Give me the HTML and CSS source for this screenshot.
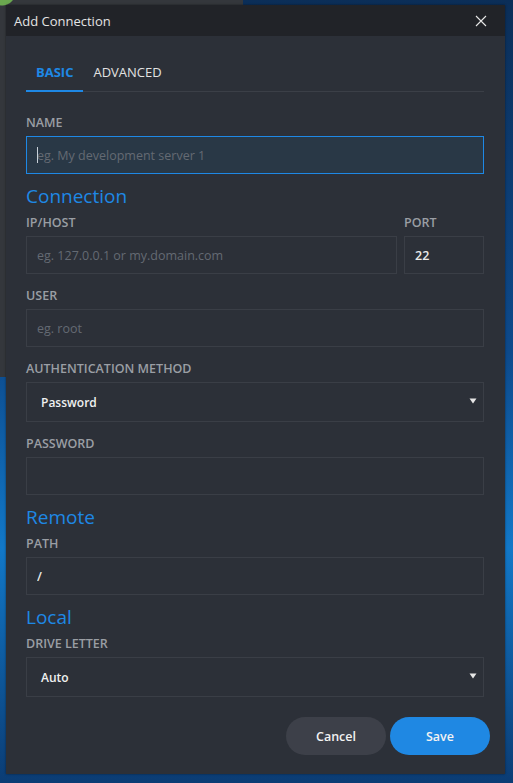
FILE: index.html
```html
<!DOCTYPE html>
<html lang="en">
<head>
<meta charset="utf-8">
<title>Add Connection</title>
<link rel="stylesheet" href="styles.css">
</head>
<body>
<div class="desktop">
  <div class="window">
    <div class="titlebar">
      <span class="title">Add Connection</span>
      <svg class="close" width="12" height="12" viewBox="0 0 12 12"><path d="M1 1 L11 11 M11 1 L1 11" stroke="#e8e8e8" stroke-width="1.1" fill="none"/></svg>
    </div>
    <div class="content">
      <div class="tabs">
        <div class="tab active">BASIC</div>
        <div class="tab">ADVANCED</div>
      </div>

      <div class="field first">
        <label class="label">NAME</label>
        <div class="control focused"><input class="input" type="text" placeholder="eg. My development server 1"></div>
      </div>

      <h2 class="section">Connection</h2>
      <div class="row">
        <div class="field grow">
          <label class="label">IP/HOST</label>
          <div class="control"><input class="input" type="text" placeholder="eg. 127.0.0.1 or my.domain.com"></div>
        </div>
        <div class="field port">
          <label class="label">PORT</label>
          <div class="control"><input class="input value" type="text" value="22"></div>
        </div>
      </div>
      <div class="field">
        <label class="label">USER</label>
        <div class="control"><input class="input" type="text" placeholder="eg. root"></div>
      </div>
      <div class="field">
        <label class="label">AUTHENTICATION METHOD</label>
        <div class="select"><span>Password</span><svg class="arrow" width="8" height="6" viewBox="0 0 8 6"><path d="M0.5 0.5 H7.5 L4 5.5 Z" fill="#e6e6e6"/></svg></div>
      </div>
      <div class="field">
        <label class="label">PASSWORD</label>
        <div class="control"><input class="input" type="password"></div>
      </div>

      <h2 class="section">Remote</h2>
      <div class="field">
        <label class="label">PATH</label>
        <div class="control"><input class="input value" type="text" value="/"></div>
      </div>

      <h2 class="section">Local</h2>
      <div class="field">
        <label class="label">DRIVE LETTER</label>
        <div class="select"><span>Auto</span><svg class="arrow" width="8" height="6" viewBox="0 0 8 6"><path d="M0.5 0.5 H7.5 L4 5.5 Z" fill="#e6e6e6"/></svg></div>
      </div>

      <div class="actions">
        <button class="btn cancel">Cancel</button>
        <button class="btn save">Save</button>
      </div>
    </div>
  </div>
</div>
</body>
</html>
```
FILE: styles.css
```css
* { box-sizing: border-box; }
html, body { margin: 0; padding: 0; }
body {
  width: 513px;
  height: 783px;
  overflow: hidden;
  font-family: "Open Sans", "Noto Sans", sans-serif;
}
.desktop {
  width: 513px;
  height: 783px;
  padding: 5px 8px 0 6px;
  background:
    radial-gradient(circle at 2px -8px, #6aa84f 0 13px, transparent 14px),
    linear-gradient(to right, #34373c 0 243px, transparent 243px) top left / 513px 5px no-repeat,
    linear-gradient(to bottom, #34373c 0 377px, transparent 377px) top left / 6px 783px no-repeat,
    linear-gradient(to bottom, #0b2e58 0%, #0d4a8c 45%, #1278c8 70%, #0b3c74 100%);
}
.window {
  width: 499px;
  height: 769px;
  background: #2c3038;
  display: flex;
  flex-direction: column;
  box-shadow: 0 0 2px rgba(0,0,0,0.5);
}
.titlebar {
  height: 31px;
  flex: 0 0 31px;
  background: #212328;
  display: flex;
  align-items: center;
  justify-content: space-between;
  padding: 0 18px 0 8px;
}
.title {
  color: #e4e4e4;
  font-size: 13px;
}
.close { display: block; }
.content {
  padding: 0 21px 0 20px;
  display: flex;
  flex-direction: column;
}
.tabs {
  margin-top: 19px;
  display: flex;
  box-shadow: inset 0 -1px 0 #3b3f47;
}
.tab {
  height: 37px;
  line-height: 35px;
  padding: 0 10px;
  font-size: 13px;
  font-weight: 400;
  color: #e2e2e2;
  border-bottom: 2px solid transparent;
}
.tab.active {
  color: #1e88e5;
  font-weight: 700;
  border-bottom-color: #1e88e5;
}
.field {
  margin-bottom: 13px;
  display: flex;
  flex-direction: column;
}
.field.first { margin-top: 22px; }
.label {
  display: block;
  height: 18px;
  line-height: 18px;
  margin-bottom: 4px;
  font-size: 12.5px;
  font-weight: 600;
  color: #9a9ea4;
}
.control { position: relative; }
.input {
  display: block;
  width: 100%;
  height: 38px;
  margin: 0;
  padding: 0 10px;
  background: transparent;
  border: 1px solid #3a3e46;
  border-radius: 0;
  outline: none;
  color: #eaeaea;
  font-family: "Open Sans", "Noto Sans", sans-serif;
  font-size: 12.5px;
}
.input::placeholder { color: #646a73; opacity: 1; }
.focused .input {
  background: #293846;
  border-color: #1e88e5;
  caret-color: transparent;
}
.focused::after {
  content: "";
  position: absolute;
  left: 11px;
  top: 11px;
  width: 1px;
  height: 16px;
  background: #c8d0d8;
}
.value { font-weight: 600; }
.row {
  display: flex;
  gap: 7px;
}
.row .grow { flex: 1; }
.row .port { width: 80px; }
.section {
  margin: -4px 0 5px;
  height: 26px;
  line-height: 26px;
  font-size: 19px;
  font-weight: 400;
  color: #1e88e5;
}
.select {
  height: 40px;
  border: 1px solid #3a3e46;
  display: flex;
  align-items: center;
  justify-content: space-between;
  padding: 0 6px 0 14px;
  color: #f0f0f0;
  font-size: 12px;
  font-weight: 600;
}
.arrow { display: block; margin-top: -2px; }
.actions {
  margin-top: 7px;
  margin-right: -6px;
  display: flex;
  justify-content: flex-end;
  gap: 4px;
}
.btn {
  width: 100px;
  height: 38px;
  border: none;
  border-radius: 19px;
  font-family: "Open Sans", "Noto Sans", sans-serif;
  font-size: 12.5px;
  font-weight: 600;
  color: #f2f2f2;
  cursor: pointer;
}
.cancel { background: #3d4049; }
.save { background: #1f88e3; }
```
